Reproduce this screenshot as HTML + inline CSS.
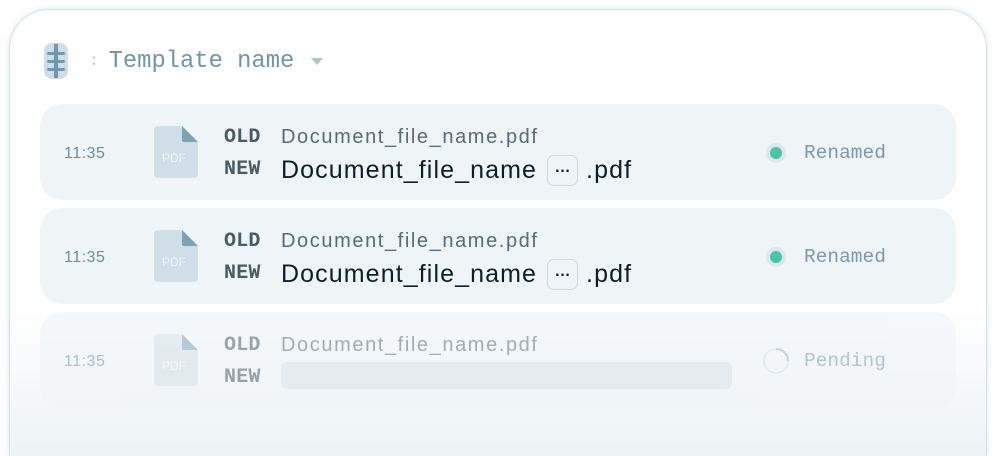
<!DOCTYPE html>
<html style="height:456px;overflow:hidden"><head><style>
html,body{margin:0;width:1004px;height:456px;overflow:hidden}
body{background:#fff;font-family:"Liberation Sans",sans-serif;position:relative}
.card{position:absolute;left:9px;top:9px;width:978px;height:447px;box-sizing:border-box;border:1.5px solid #d3e0e8;border-bottom:none;border-radius:40px 40px 0 0;box-shadow:0 0 6px rgba(150,180,200,.35);background:linear-gradient(#fff 0,#fff 300px,#eef3f6 440px)}
.hdr{position:absolute;left:44px;top:43px;display:flex;align-items:center}
.mono{font-family:"Liberation Mono",monospace}
.row{position:absolute;left:40px;width:916px;height:96px;border-radius:22px;background:#eff4f7}
.time{position:absolute;left:24px;top:41px;font-size:16px;color:#6f8ca0;letter-spacing:.5px}
.file{position:absolute;left:114px;top:22px}
.lab{position:absolute;left:184px;font-family:"Liberation Mono",monospace;font-weight:bold;font-size:20px;color:#4a5b66;letter-spacing:.2px}
.old{position:absolute;left:241px;top:22px;font-size:20px;color:#5a6a74;letter-spacing:1.6px}
.new{position:absolute;left:241px;top:51px;font-size:25px;color:#0f1d26;display:flex;align-items:center;letter-spacing:1.1px}
.dots{display:inline-block;width:31px;height:31px;border:1.5px solid #c9dae3;border-radius:7px;margin:0 8px 0 10px;font-size:16px;text-align:center;line-height:24px;font-weight:bold;box-sizing:border-box;letter-spacing:0}
.st{position:absolute;left:764px;font-family:"Liberation Mono",monospace;font-size:19.5px;color:#7a98aa}
.dot{position:absolute;left:726px;width:20px;height:20px;border-radius:50%;background:#dde7ed}
.dot i{position:absolute;left:4px;top:4px;width:12px;height:12px;border-radius:50%;background:#47c6a6}
</style></head><body>
<div class="card"></div>
<div class="hdr">
<svg width="24" height="36" viewBox="0 0 24 36"><rect x="0" y="0" width="24" height="36" rx="8" fill="#cfdee6"/><rect x="10" y="1" width="4" height="34" fill="#6f96aa"/><rect x="3" y="9" width="18" height="3" rx="1.5" fill="#6f96aa"/><rect x="3" y="17" width="18" height="3" rx="1.5" fill="#6f96aa"/><rect x="3" y="25" width="18" height="3" rx="1.5" fill="#6f96aa"/></svg>
<span class="mono" style="color:#b8c8d2;font-size:16px;margin-left:21px">:</span>
<span class="mono" style="color:#6e95a8;font-size:23.8px;margin-left:10px">Template name</span>
<svg width="14" height="10" style="margin-left:16px" viewBox="0 0 14 10"><path d="M1 2h12L7 9z" fill="#b0c2cd"/></svg>
</div>

<div class="row" style="top:104px">
<div class="time">11:35</div>
<div class="file"><svg width="44" height="52" viewBox="0 0 44 52"><path d="M4 0h24l16 16v32a4 4 0 0 1-4 4H4a4 4 0 0 1-4-4V4a4 4 0 0 1 4-4z" fill="#d0dfe7"/><path d="M28 0l16 16H30a2 2 0 0 1-2-2z" fill="#7ea3b5"/><text x="8" y="36" font-size="12" fill="#eef4f7" font-family="Liberation Sans">PDF</text></svg></div>
<div class="lab" style="top:22px">OLD</div><div class="lab" style="top:54px">NEW</div>
<div class="old">Document_file_name.pdf</div>
<div class="new">Document_file_name<span class="dots">…</span>.pdf</div>
<div class="dot" style="top:39px"><i></i></div><div class="st" style="top:38px">Renamed</div>
</div>

<div class="row" style="top:208px">
<div class="time">11:35</div>
<div class="file"><svg width="44" height="52" viewBox="0 0 44 52"><path d="M4 0h24l16 16v32a4 4 0 0 1-4 4H4a4 4 0 0 1-4-4V4a4 4 0 0 1 4-4z" fill="#d0dfe7"/><path d="M28 0l16 16H30a2 2 0 0 1-2-2z" fill="#7ea3b5"/><text x="8" y="36" font-size="12" fill="#eef4f7" font-family="Liberation Sans">PDF</text></svg></div>
<div class="lab" style="top:22px">OLD</div><div class="lab" style="top:54px">NEW</div>
<div class="old">Document_file_name.pdf</div>
<div class="new">Document_file_name<span class="dots">…</span>.pdf</div>
<div class="dot" style="top:39px"><i></i></div><div class="st" style="top:38px">Renamed</div>
</div>

<div class="row" style="top:312px;opacity:.55">
<div class="time">11:35</div>
<div class="file"><svg width="44" height="52" viewBox="0 0 44 52"><path d="M4 0h24l16 16v32a4 4 0 0 1-4 4H4a4 4 0 0 1-4-4V4a4 4 0 0 1 4-4z" fill="#d0dfe7"/><path d="M28 0l16 16H30a2 2 0 0 1-2-2z" fill="#7ea3b5"/><text x="8" y="36" font-size="12" fill="#eef4f7" font-family="Liberation Sans">PDF</text></svg></div>
<div class="lab" style="top:22px">OLD</div><div class="lab" style="top:54px">NEW</div>
<div class="old">Document_file_name.pdf</div>
<div style="position:absolute;left:241px;top:50px;width:451px;height:27px;border-radius:6px;background:#d6e2e9"></div>
<svg style="position:absolute;left:722px;top:35px" width="28" height="28" viewBox="0 0 28 28"><circle cx="14" cy="14" r="12" fill="none" stroke="#d6e2e9" stroke-width="2"/><path d="M14 2a12 12 0 0 1 12 12" fill="none" stroke="#9fb1bc" stroke-width="2"/></svg>
<div class="st" style="top:38px">Pending</div>
</div>
</body></html>
